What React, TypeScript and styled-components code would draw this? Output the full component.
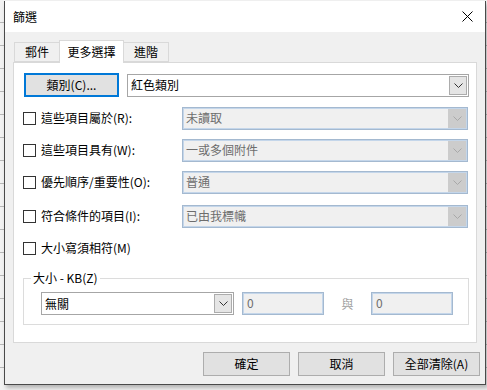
import React from "react";
import styled, { createGlobalStyle } from "styled-components";

const Global = createGlobalStyle`
  html, body { margin: 0; padding: 0; }
  body {
    width: 487px;
    height: 390px;
    overflow: hidden;
    background: #ececec;
    font-family: "Noto Sans CJK TC", "Noto Sans", sans-serif;
    font-size: 12px;
    color: #000;
  }
`;

const Page = styled.div`
  width: 487px;
  height: 390px;
  box-sizing: border-box;
  padding: 1px 0 0 4px;
  background:
    repeating-linear-gradient(180deg, transparent 0 22px, #b8b8b8 22px 23px),
    #f2f2f2;
`;

const Dialog = styled.div`
  width: 482px;
  height: 384px;
  box-sizing: border-box;
  border: 1px solid #4a4a4a;
  border-top: none;
  background: #f0f0f0;
  display: flex;
  flex-direction: column;
  box-shadow: 2px 3px 4px rgba(0, 0, 0, 0.25);
`;

const TitleBar = styled.div`
  height: 31px;
  background: #fff;
  display: flex;
  align-items: center;
  justify-content: space-between;
  padding: 0 12px 0 8px;
  flex: none;
`;

const Title = styled.span`
  font-size: 12px;
  line-height: 16px;
  margin-top: 1px;
`;

const Body = styled.div`
  flex: 1;
  display: flex;
  flex-direction: column;
  padding: 8px 8px 0 8px;
`;

const TabStrip = styled.div`
  display: flex;
  align-items: flex-end;
  height: 22px;
  padding-left: 1px;
  position: relative;
  z-index: 1;
`;

const Tab = styled.div<{ $active?: boolean }>`
  box-sizing: border-box;
  height: ${(p) => (p.$active ? "23px" : "20px")};
  padding: 0 ${(p) => (p.$active ? "7px" : "6px")};
  margin-bottom: ${(p) => (p.$active ? "-1px" : "0")};
  background: ${(p) => (p.$active ? "#fff" : "#f0f0f0")};
  border: 1px solid #d9d9d9;
  border-bottom: ${(p) => (p.$active ? "none" : "1px solid #d9d9d9")};
  margin-left: ${(p) => (p.$active ? "-1px" : "0")};
  margin-right: ${(p) => (p.$active ? "-1px" : "0")};
  display: flex;
  align-items: center;
  justify-content: center;
  font-size: 12px;
  line-height: 16px;
  min-width: ${(p) => (p.$active ? "65px" : "46px")};
`;

const Panel = styled.div`
  box-sizing: border-box;
  height: 281px;
  background: #fff;
  border: 1px solid #d9d9d9;
  padding: 10px 8px 0 9px;
  display: flex;
  flex-direction: column;
`;

const Row = styled.div<{ $mt?: number; $h?: number; $gap?: number; $pl?: number }>`
  display: flex;
  align-items: center;
  height: ${(p) => p.$h ?? 22}px;
  gap: ${(p) => p.$gap ?? 0}px;
  margin-top: ${(p) => p.$mt ?? 0}px;
  padding-left: ${(p) => p.$pl ?? 0}px;
`;

const CatButton = styled.button`
  box-sizing: border-box;
  width: 95px;
  height: 24px;
  margin: 0;
  background: #e1e1e1;
  border: 2px solid #0078d7;
  font-family: inherit;
  font-size: 12px;
  line-height: 16px;
  color: #000;
  padding: 0;
  flex: none;
`;

const Combo = styled.div<{ $disabled?: boolean; $w?: number }>`
  box-sizing: border-box;
  width: ${(p) => p.$w ?? 286}px;
  height: 23px;
  border: 1px solid ${(p) => (p.$disabled ? "#a4b9d0" : "#a6a6a6")};
  box-shadow: ${(p) => (p.$disabled ? "inset 0 0 0 1px #c4d6ea" : "none")};
  background: ${(p) => (p.$disabled ? "#f0f0f0" : "#fff")};
  display: flex;
  align-items: center;
  padding: 1px 1px 1px 3px;
  flex: none;
`;

const ComboText = styled.span<{ $disabled?: boolean }>`
  flex: 1;
  font-size: 12px;
  line-height: 16px;
  color: ${(p) => (p.$disabled ? "#6d6d6d" : "#000")};
  white-space: nowrap;
`;

const ArrowBtn = styled.div<{ $disabled?: boolean }>`
  box-sizing: border-box;
  width: 18px;
  height: 100%;
  flex: none;
  background: ${(p) => (p.$disabled ? "#cccccc" : "#e5e5e5")};
  border: 1px solid ${(p) => (p.$disabled ? "#cccccc" : "#acacac")};
  display: flex;
  align-items: center;
  justify-content: center;
`;

const CheckLabel = styled.label`
  display: flex;
  align-items: center;
  width: 159px;
  flex: none;
  gap: 5px;
  font-size: 12px;
  line-height: 16px;
  white-space: nowrap;
`;

const Box = styled.span`
  box-sizing: border-box;
  width: 13px;
  height: 13px;
  border: 1px solid #333;
  background: #fff;
  flex: none;
`;

const Group = styled.fieldset`
  box-sizing: border-box;
  margin: 12px 0 0 0;
  width: 446px;
  min-width: 0;
  border: 1px solid #dcdcdc;
  padding: 7px 0 9px 17px;
`;

const Legend = styled.legend`
  padding: 0 2px;
  margin-left: -10px;
  font-size: 12px;
  line-height: 14px;
`;

const GroupRow = styled.div`
  display: flex;
  align-items: center;
`;

const Spacer = styled.span`
  width: 8px;
  flex: none;
`;

const TextField = styled.div`
  box-sizing: border-box;
  width: 82px;
  height: 23px;
  border: 1px solid #a4b9d0;
  box-shadow: inset 0 0 0 1px #c4d6ea;
  background: #f0f0f0;
  color: #6d6d6d;
  font-size: 12px;
  line-height: 16px;
  padding: 2px 4px;
`;

const And = styled.span`
  width: 47px;
  text-align: center;
  color: #a0a0a0;
  font-size: 12px;
  line-height: 16px;
`;

const Footer = styled.div`
  display: flex;
  justify-content: flex-end;
  gap: 8px;
  padding: 9px 0 0 0;
  margin-right: -3px;
`;

const DlgButton = styled.button`
  box-sizing: border-box;
  width: 87px;
  height: 24px;
  background: #e1e1e1;
  border: 1px solid #adadad;
  font-family: inherit;
  font-size: 12px;
  line-height: 16px;
  color: #000;
  padding: 0;
  margin: 0;
`;

const Chevron = ({ color }: { color: string }) => (
  <svg width="9" height="5" viewBox="0 0 9 5">
    <polyline points="0.5,0.5 4.5,4.5 8.5,0.5" fill="none" stroke={color} strokeWidth="1" />
  </svg>
);

const Close = () => (
  <svg width="11" height="11" viewBox="0 0 11 11">
    <line x1="0.5" y1="0.5" x2="10.5" y2="10.5" stroke="#000" strokeWidth="1" />
    <line x1="10.5" y1="0.5" x2="0.5" y2="10.5" stroke="#000" strokeWidth="1" />
  </svg>
);

const ComboBox = ({ text, disabled, w }: { text: string; disabled?: boolean; w?: number }) => (
  <Combo $disabled={disabled} $w={w}>
    <ComboText $disabled={disabled}>{text}</ComboText>
    <ArrowBtn $disabled={disabled}>
      <Chevron color={disabled ? "#a8a8a8" : "#333"} />
    </ArrowBtn>
  </Combo>
);

const rows = [
  { label: "這些項目屬於(R):", value: "未讀取", mt: 10 },
  { label: "這些項目具有(W):", value: "一或多個附件", mt: 10 },
  { label: "優先順序/重要性(O):", value: "普通", mt: 10 },
  { label: "符合條件的項目(I):", value: "已由我標幟", mt: 12 },
];

export default function App() {
  return (
    <>
      <Global />
      <Page>
        <Dialog>
          <TitleBar>
            <Title>篩選</Title>
            <Close />
          </TitleBar>
          <Body>
            <TabStrip>
              <Tab>郵件</Tab>
              <Tab $active>更多選擇</Tab>
              <Tab>進階</Tab>
            </TabStrip>
            <Panel>
              <Row $h={24} $gap={8} $pl={1}>
                <CatButton>類別(C)...</CatButton>
                <ComboBox text="紅色類別" w={342} />
              </Row>
              {rows.map((r) => (
                <Row key={r.label} $mt={r.mt}>
                  <CheckLabel>
                    <Box />
                    {r.label}
                  </CheckLabel>
                  <ComboBox text={r.value} disabled />
                </Row>
              ))}
              <Row $mt={10}>
                <CheckLabel>
                  <Box />
                  大小寫須相符(M)
                </CheckLabel>
              </Row>
              <Group>
                <Legend>大小 - KB(Z)</Legend>
                <GroupRow>
                  <ComboBox text="無關" w={193} />
                  <Spacer />
                  <TextField>0</TextField>
                  <And>與</And>
                  <TextField>0</TextField>
                </GroupRow>
              </Group>
            </Panel>
            <Footer>
              <DlgButton>確定</DlgButton>
              <DlgButton>取消</DlgButton>
              <DlgButton>全部清除(A)</DlgButton>
            </Footer>
          </Body>
        </Dialog>
      </Page>
    </>
  );
}
